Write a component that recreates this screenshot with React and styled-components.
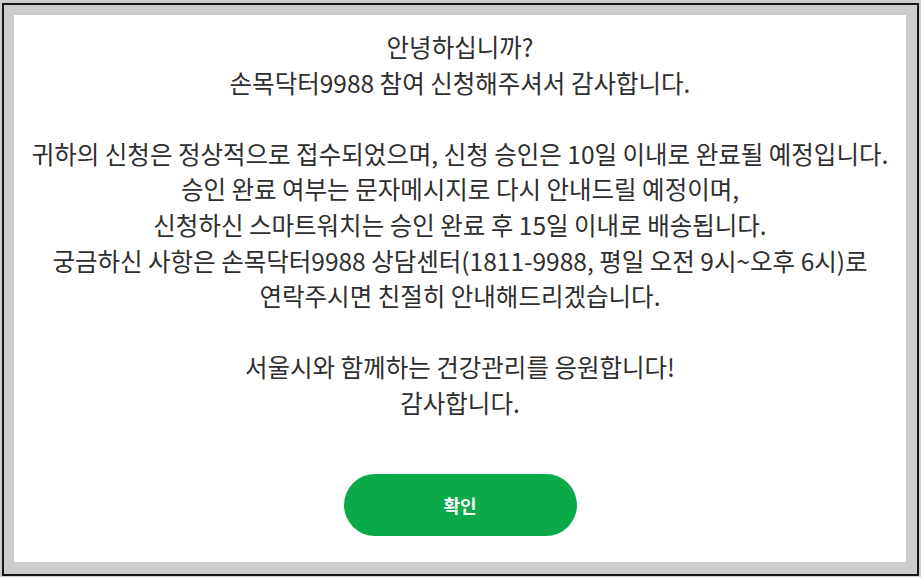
import React from "react";
import styled, { createGlobalStyle } from "styled-components";

const Global = createGlobalStyle`
  html, body { margin: 0; padding: 0; }
  body {
    background: #cccccc;
    font-family: "Noto Sans CJK KR", "Noto Sans", sans-serif;
  }
`;

const Frame = styled.div`
  box-sizing: border-box;
  width: 917px;
  height: 573px;
  margin: 3px 2px 0 2px;
  border: 2px solid #161616;
  padding: 10px 11px 12px 10px;
  background: #cccccc;
`;

const Panel = styled.div`
  box-sizing: border-box;
  height: 100%;
  background: #ffffff;
  display: flex;
  flex-direction: column;
  align-items: center;
  padding-top: 14px;
`;

const Message = styled.div`
  font-size: 24.5px;
  line-height: 35.6px;
  color: #2e2e2e;
  text-align: center;
`;

const Line = styled.p`
  margin: 0;
  white-space: nowrap;
`;

const Spacer = styled.div`
  height: 35.6px;
`;

const ConfirmButton = styled.button`
  margin-top: 53px;
  width: 233px;
  height: 62px;
  border: none;
  border-radius: 31px;
  background: #09aa47;
  color: #ffffff;
  font-family: "Noto Sans CJK KR", "Noto Sans", sans-serif;
  font-size: 18px;
  font-weight: 700;
  cursor: pointer;
`;

export default function App() {
  return (
    <>
      <Global />
      <Frame>
        <Panel>
          <Message>
            <Line>안녕하십니까?</Line>
            <Line>손목닥터9988 참여 신청해주셔서 감사합니다.</Line>
            <Spacer />
            <Line>귀하의 신청은 정상적으로 접수되었으며, 신청 승인은 10일 이내로 완료될 예정입니다.</Line>
            <Line>승인 완료 여부는 문자메시지로 다시 안내드릴 예정이며,</Line>
            <Line>신청하신 스마트워치는 승인 완료 후 15일 이내로 배송됩니다.</Line>
            <Line>궁금하신 사항은 손목닥터9988 상담센터(1811-9988, 평일 오전 9시~오후 6시)로</Line>
            <Line>연락주시면 친절히 안내해드리겠습니다.</Line>
            <Spacer />
            <Line>서울시와 함께하는 건강관리를 응원합니다!</Line>
            <Line>감사합니다.</Line>
          </Message>
          <ConfirmButton>확인</ConfirmButton>
        </Panel>
      </Frame>
    </>
  );
}
